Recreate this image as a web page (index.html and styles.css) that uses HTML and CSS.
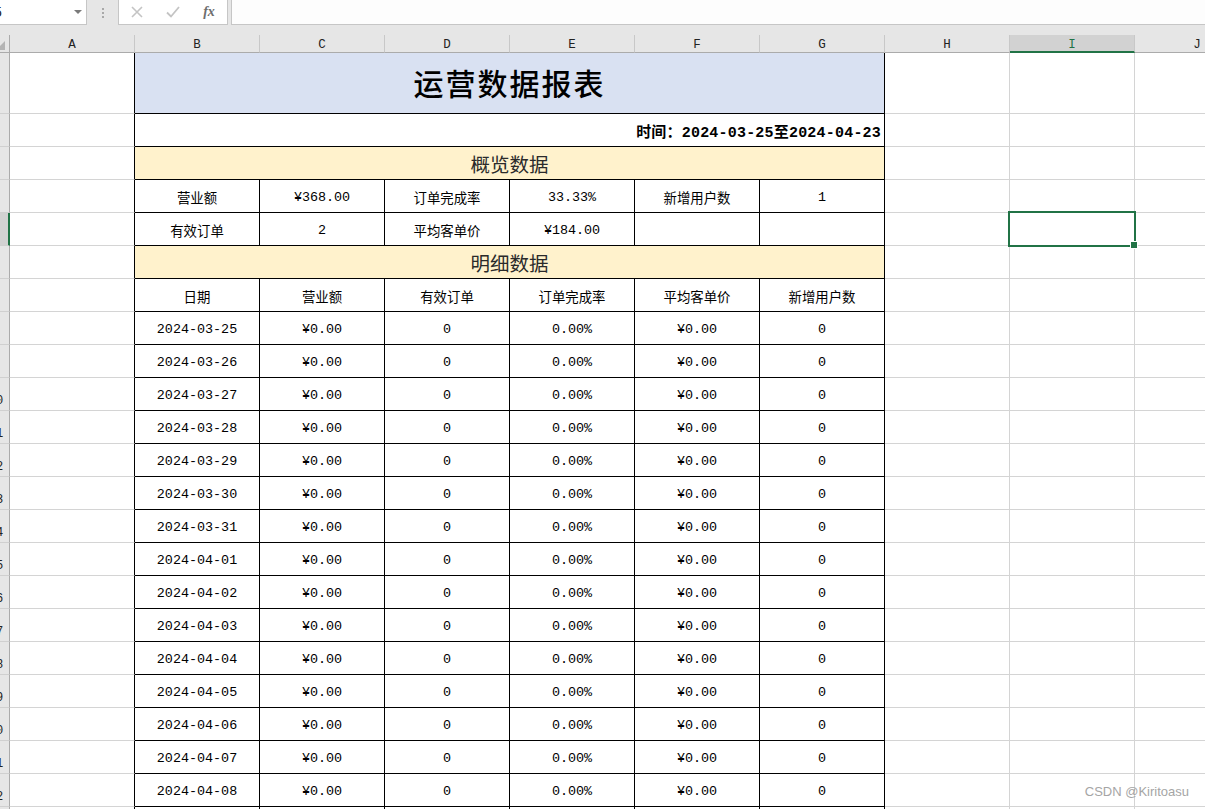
FILE: index.html
```html
<!DOCTYPE html>
<html lang="zh-CN">
<head>
<meta charset="utf-8">
<title>运营数据报表</title>
<link rel="stylesheet" href="styles.css">
</head>
<body>
<div class="app">
  <div class="formula-bar">
    <div class="name-box"><span class="name-text">I5</span><span class="dd"></span></div>
    <div class="grip"><span></span><span></span><span></span></div>
    <div class="fx-buttons">
      <span class="btn"><svg width="12" height="12" viewBox="0 0 12 12"><path d="M1 1 L11 11 M11 1 L1 11" stroke="#c4c4c4" stroke-width="1.6" fill="none"/></svg></span>
      <span class="btn"><svg width="14" height="12" viewBox="0 0 14 12"><path d="M1 6.5 L5 10.5 L13 1" stroke="#c4c4c4" stroke-width="1.8" fill="none"/></svg></span>
      <span class="btn fx">fx</span>
    </div>
    <div class="formula-input"></div>
  </div>
  <div class="band"></div>
  <div class="sheet">
    <!-- column headers -->
    <div class="corner"><svg width="10" height="18" viewBox="0 0 10 18"><polygon points="-4,15 5,15 5,6" fill="#b4b4b4"/></svg></div>
    <div class="ch">A</div><div class="ch">B</div><div class="ch">C</div><div class="ch">D</div><div class="ch">E</div><div class="ch">F</div><div class="ch">G</div><div class="ch">H</div><div class="ch sel">I</div><div class="ch">J</div>

    <!-- row 1 -->
    <div class="rh"><span>1</span></div><div class="c edge"></div>
    <div class="t span6 title">运营数据报表</div>
    <div class="c"></div><div class="c"></div><div class="c"></div>

    <!-- row 2 -->
    <div class="rh"><span>2</span></div><div class="c edge"></div>
    <div class="t span6 time">时间：2024-03-25至2024-04-23</div>
    <div class="c"></div><div class="c"></div><div class="c"></div>

    <!-- row 3 -->
    <div class="rh"><span>3</span></div><div class="c edge"></div>
    <div class="t span6 section">概览数据</div>
    <div class="c"></div><div class="c"></div><div class="c"></div>

    <!-- row 4 -->
    <div class="rh"><span>4</span></div><div class="c edge"></div>
    <div class="t">营业额</div><div class="t">¥368.00</div><div class="t">订单完成率</div><div class="t">33.33%</div><div class="t">新增用户数</div><div class="t">1</div>
    <div class="c"></div><div class="c"></div><div class="c"></div>

    <!-- row 5 -->
    <div class="rh sel"><span>5</span></div><div class="c edge"></div>
    <div class="t">有效订单</div><div class="t">2</div><div class="t">平均客单价</div><div class="t">¥184.00</div><div class="t"></div><div class="t"></div>
    <div class="c"></div><div class="c active"><span class="cursor"><span class="handle"></span></span></div><div class="c"></div>

    <!-- row 6 -->
    <div class="rh"><span>6</span></div><div class="c edge"></div>
    <div class="t span6 section">明细数据</div>
    <div class="c"></div><div class="c"></div><div class="c"></div>

    <!-- row 7 -->
    <div class="rh"><span>7</span></div><div class="c edge"></div>
    <div class="t">日期</div><div class="t">营业额</div><div class="t">有效订单</div><div class="t">订单完成率</div><div class="t">平均客单价</div><div class="t">新增用户数</div>
    <div class="c"></div><div class="c"></div><div class="c"></div>

    <div class="rh"><span>8</span></div><div class="c edge"></div>
    <div class="t">2024-03-25</div><div class="t">¥0.00</div><div class="t">0</div><div class="t">0.00%</div><div class="t">¥0.00</div><div class="t">0</div>
    <div class="c"></div><div class="c"></div><div class="c"></div>

    <div class="rh"><span>9</span></div><div class="c edge"></div>
    <div class="t">2024-03-26</div><div class="t">¥0.00</div><div class="t">0</div><div class="t">0.00%</div><div class="t">¥0.00</div><div class="t">0</div>
    <div class="c"></div><div class="c"></div><div class="c"></div>

    <div class="rh"><span>10</span></div><div class="c edge"></div>
    <div class="t">2024-03-27</div><div class="t">¥0.00</div><div class="t">0</div><div class="t">0.00%</div><div class="t">¥0.00</div><div class="t">0</div>
    <div class="c"></div><div class="c"></div><div class="c"></div>

    <div class="rh"><span>11</span></div><div class="c edge"></div>
    <div class="t">2024-03-28</div><div class="t">¥0.00</div><div class="t">0</div><div class="t">0.00%</div><div class="t">¥0.00</div><div class="t">0</div>
    <div class="c"></div><div class="c"></div><div class="c"></div>

    <div class="rh"><span>12</span></div><div class="c edge"></div>
    <div class="t">2024-03-29</div><div class="t">¥0.00</div><div class="t">0</div><div class="t">0.00%</div><div class="t">¥0.00</div><div class="t">0</div>
    <div class="c"></div><div class="c"></div><div class="c"></div>

    <div class="rh"><span>13</span></div><div class="c edge"></div>
    <div class="t">2024-03-30</div><div class="t">¥0.00</div><div class="t">0</div><div class="t">0.00%</div><div class="t">¥0.00</div><div class="t">0</div>
    <div class="c"></div><div class="c"></div><div class="c"></div>

    <div class="rh"><span>14</span></div><div class="c edge"></div>
    <div class="t">2024-03-31</div><div class="t">¥0.00</div><div class="t">0</div><div class="t">0.00%</div><div class="t">¥0.00</div><div class="t">0</div>
    <div class="c"></div><div class="c"></div><div class="c"></div>

    <div class="rh"><span>15</span></div><div class="c edge"></div>
    <div class="t">2024-04-01</div><div class="t">¥0.00</div><div class="t">0</div><div class="t">0.00%</div><div class="t">¥0.00</div><div class="t">0</div>
    <div class="c"></div><div class="c"></div><div class="c"></div>

    <div class="rh"><span>16</span></div><div class="c edge"></div>
    <div class="t">2024-04-02</div><div class="t">¥0.00</div><div class="t">0</div><div class="t">0.00%</div><div class="t">¥0.00</div><div class="t">0</div>
    <div class="c"></div><div class="c"></div><div class="c"></div>

    <div class="rh"><span>17</span></div><div class="c edge"></div>
    <div class="t">2024-04-03</div><div class="t">¥0.00</div><div class="t">0</div><div class="t">0.00%</div><div class="t">¥0.00</div><div class="t">0</div>
    <div class="c"></div><div class="c"></div><div class="c"></div>

    <div class="rh"><span>18</span></div><div class="c edge"></div>
    <div class="t">2024-04-04</div><div class="t">¥0.00</div><div class="t">0</div><div class="t">0.00%</div><div class="t">¥0.00</div><div class="t">0</div>
    <div class="c"></div><div class="c"></div><div class="c"></div>

    <div class="rh"><span>19</span></div><div class="c edge"></div>
    <div class="t">2024-04-05</div><div class="t">¥0.00</div><div class="t">0</div><div class="t">0.00%</div><div class="t">¥0.00</div><div class="t">0</div>
    <div class="c"></div><div class="c"></div><div class="c"></div>

    <div class="rh"><span>20</span></div><div class="c edge"></div>
    <div class="t">2024-04-06</div><div class="t">¥0.00</div><div class="t">0</div><div class="t">0.00%</div><div class="t">¥0.00</div><div class="t">0</div>
    <div class="c"></div><div class="c"></div><div class="c"></div>

    <div class="rh"><span>21</span></div><div class="c edge"></div>
    <div class="t">2024-04-07</div><div class="t">¥0.00</div><div class="t">0</div><div class="t">0.00%</div><div class="t">¥0.00</div><div class="t">0</div>
    <div class="c"></div><div class="c"></div><div class="c"></div>

    <div class="rh"><span>22</span></div><div class="c edge"></div>
    <div class="t">2024-04-08</div><div class="t">¥0.00</div><div class="t">0</div><div class="t">0.00%</div><div class="t">¥0.00</div><div class="t">0</div>
    <div class="c"></div><div class="c"></div><div class="c"></div>

    <div class="rh"><span>23</span></div><div class="c edge"></div>
    <div class="t">2024-04-09</div><div class="t">¥0.00</div><div class="t">0</div><div class="t">0.00%</div><div class="t">¥0.00</div><div class="t">0</div>
    <div class="c"></div><div class="c"></div><div class="c"></div>
  </div>
  <div class="watermark">CSDN @Kiritoasu</div>
</div>
</body>
</html>
```

FILE: styles.css
```css
html, body {
  margin: 0;
  padding: 0;
  overflow: hidden;
  background: #ffffff;
}

.app {
  position: relative;
  width: 1205px;
  height: 809px;
  overflow: hidden;
  font-family: "Liberation Mono", "Noto Sans CJK SC", monospace;
  font-size: 13.4px;
  color: #000;
}

/* ---------- formula bar ---------- */
.formula-bar {
  display: flex;
  height: 25px;
  background: #e6e6e6;
}

.name-box {
  position: relative;
  width: 87px;
  height: 25px;
  box-sizing: border-box;
  background: #fff;
  border-right: 1px solid #c6c6c6;
  border-bottom: 1px solid #c6c6c6;
  overflow: hidden;
  display: flex;
  align-items: center;
}

.name-text {
  margin-left: -10px;
  font-family: "Liberation Sans", sans-serif;
  font-size: 14px;
  color: #222;
}

.dd {
  position: absolute;
  left: 74px;
  top: 10px;
  width: 0;
  height: 0;
  border-left: 4px solid transparent;
  border-right: 4px solid transparent;
  border-top: 4px solid #7a7a7a;
}

.grip {
  width: 31px;
  display: flex;
  flex-direction: column;
  align-items: center;
  justify-content: center;
  gap: 2px;
}

.grip span {
  width: 2px;
  height: 2px;
  background: #a8a8a8;
}

.fx-buttons {
  width: 110px;
  height: 25px;
  box-sizing: border-box;
  background: #fff;
  border: 1px solid #c6c6c6;
  border-top: none;
  display: flex;
  align-items: center;
}

.btn {
  width: 36px;
  display: flex;
  justify-content: center;
  align-items: center;
}

.btn svg {
  display: block;
}

.btn.fx {
  font-family: "Liberation Serif", serif;
  font-style: italic;
  font-weight: bold;
  font-size: 14px;
  color: #6e6e6e;
  line-height: 1;
}

.formula-input {
  flex: 1;
  margin-left: 3px;
  height: 25px;
  box-sizing: border-box;
  background: #fdfdfd;
  border-left: 1px solid #c6c6c6;
  border-bottom: 1px solid #c6c6c6;
}

.band {
  height: 10px;
  background: #e6e6e6;
}

/* ---------- sheet ---------- */
.sheet {
  display: grid;
  grid-template-columns: 10px repeat(10, 125px);
  grid-template-rows: 18px 61px repeat(22, 33px);
}

.corner {
  background: #e6e6e6;
  border-right: 1px solid #ababab;
  border-bottom: 1px solid #ababab;
  box-sizing: border-box;
  overflow: hidden;
}

.corner svg {
  display: block;
}

.ch {
  background: #e6e6e6;
  box-sizing: border-box;
  border-right: 1px solid #c8c8c8;
  border-bottom: 1px solid #ababab;
  display: flex;
  align-items: center;
  justify-content: center;
  font-family: "Liberation Mono", monospace;
  font-size: 12.5px;
  color: #222;
  padding-top: 2px;
}

.ch.sel {
  background: #d2d2d2;
  color: #217346;
  border-bottom: 2px solid #217346;
  padding-top: 3px;
}

.rh {
  background: #e6e6e6;
  box-sizing: border-box;
  border-right: 1px solid #ababab;
  border-bottom: 1px solid #d0d0d0;
  overflow: hidden;
  display: flex;
  justify-content: flex-end;
  align-items: flex-end;
}

.rh span {
  flex: 0 0 26px;
  text-align: center;
  font-family: "Liberation Mono", monospace;
  font-size: 12px;
  color: #222;
  padding-bottom: 2px;
}

.rh.sel {
  background: #d2d2d2;
  border-right: 2px solid #217346;
}

.c {
  box-sizing: border-box;
  border-right: 1px solid #d4d4d4;
  border-bottom: 1px solid #d4d4d4;
}

.c.edge {
  border-right-color: #000;
}

.c.active {
  position: relative;
}

.cursor {
  position: absolute;
  left: -2px;
  top: -2px;
  width: 128px;
  height: 36px;
  box-sizing: border-box;
  border: 2px solid #217346;
}

.handle {
  position: absolute;
  right: -4px;
  bottom: -4px;
  width: 6px;
  height: 6px;
  background: #217346;
  border: 1px solid #fff;
}

.t {
  box-sizing: border-box;
  border-right: 1px solid #000;
  border-bottom: 1px solid #000;
  display: flex;
  align-items: center;
  justify-content: center;
  white-space: nowrap;
  padding-top: 2px;
}

.span6 {
  grid-column: span 6;
}

.title {
  background: #d9e1f2;
  font-size: 30px;
  font-weight: 500;
  letter-spacing: 2px;
  padding-top: 0;
  padding-bottom: 2px;
  color: #000;
}

.time {
  justify-content: flex-end;
  padding-right: 3px;
  font-size: 15px;
  font-weight: bold;
  letter-spacing: 0.2px;
}

.section {
  background: #fff2cc;
  font-size: 19.5px;
  color: #2a2a2a;
  padding-top: 0;
}

.watermark {
  position: absolute;
  right: 16px;
  top: 784px;
  font-family: "Liberation Sans", Arial, sans-serif;
  font-size: 13px;
  color: #a5a5a5;
}
```
